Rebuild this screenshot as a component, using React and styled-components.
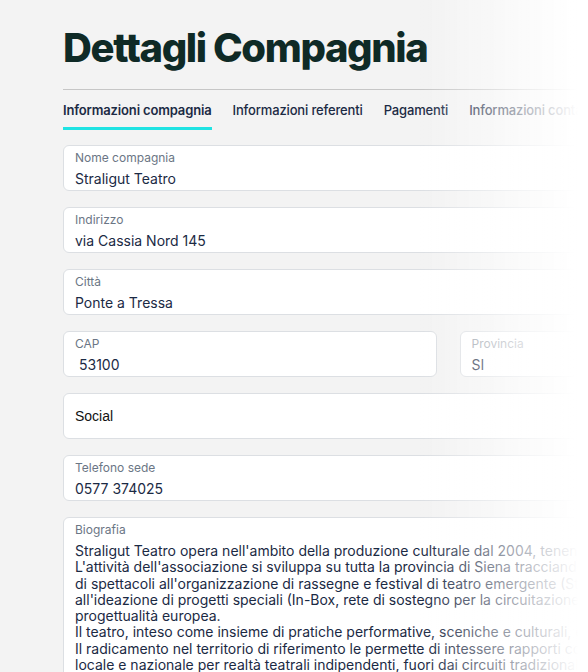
import styled, { createGlobalStyle } from 'styled-components';

const Global = createGlobalStyle`
  html, body { margin: 0; padding: 0; background: #f3f3f3; overflow: hidden; }
  body { font-family: Inter, "Noto Sans", sans-serif; }
`;

const Page = styled.div`
  width: 860px;
  padding: 24px 0 0 63px;
  box-sizing: border-box;
`;

const Title = styled.h1`
  margin: 0;
  font-size: 40px;
  line-height: 48px;
  font-weight: 800;
  color: #0f2a26;
  letter-spacing: -1.4px;
`;

const Tabs = styled.nav`
  margin-top: 17px;
  border-top: 1px solid #c6c6c6;
  display: flex;
  gap: 21px;
  padding-top: 12px;
`;

const Tab = styled.div`
  font-size: 13px;
  font-weight: ${({ $active }) => ($active ? 600 : 500)};
  letter-spacing: -0.15px;
  color: #1b2a44;
  padding-bottom: 9px;
  border-bottom: 3px solid ${({ $active }) => ($active ? '#1fe3e3' : 'transparent')};
  white-space: nowrap;
`;

const Form = styled.div`
  margin-top: 15px;
  display: flex;
  flex-direction: column;
  gap: 16px;
  width: 770px;
`;

const Row = styled.div`
  display: grid;
  grid-template-columns: 1fr 1fr;
  gap: 23px;
`;

const Field = styled.div`
  background: #fff;
  border: 1px solid #dcdfe3;
  border-radius: 6px;
  height: ${({ $tall }) => ($tall ? 'auto' : '46px')};
  box-sizing: border-box;
  padding: 5px 11px 0;
  display: flex;
  flex-direction: column;
  justify-content: ${({ $plain }) => ($plain ? 'center' : 'flex-start')};
  ${({ $plain }) => $plain && 'padding-top: 0;'}
`;

const Label = styled.div`
  font-size: 12px;
  line-height: 14px;
  color: ${({ $muted }) => ($muted ? '#9ba2ab' : '#6b7685')};
`;

const Value = styled.div`
  margin-top: 5px;
  font-size: 14px;
  line-height: 18px;
  color: #1b2a44;
  padding-left: ${({ $indent }) => ($indent ? '4px' : '0')};
`;

const Plain = styled.div`
  font-family: "Liberation Sans", Arial, sans-serif;
  font-size: 14px;
  color: #111;
`;

const Bio = styled.div`
  margin-top: 6px;
  font-size: 14px;
  line-height: 16.3px;
  color: #1b2a44;
  white-space: pre;
  overflow: hidden;
  padding-bottom: 20px;
`;

const Fade = styled.div`
  position: fixed;
  inset: 0;
  pointer-events: none;
  background: linear-gradient(to right, rgba(255,255,255,0) 420px, rgba(255,255,255,0.6) 515px, #fff 578px);
`;

const bio = `Straligut Teatro opera nell'ambito della produzione culturale dal 2004, tenendo insieme creazione artistica e formazione.
L'attività dell'associazione si sviluppa su tutta la provincia di Siena tracciando un percorso che va dalla produzione
di spettacoli all'organizzazione di rassegne e festival di teatro emergente (Straligut Festival, Sipario Aperto)
all'ideazione di progetti speciali (In-Box, rete di sostegno per la circuitazione del teatro emergente) e alla
progettualità europea.
Il teatro, inteso come insieme di pratiche performative, sceniche e culturali, è per Straligut uno strumento di crescita.
Il radicamento nel territorio di riferimento le permette di intessere rapporti con istituzioni e operatori a livello
locale e nazionale per realtà teatrali indipendenti, fuori dai circuiti tradizionali.`;

const tabs = ['Informazioni compagnia', 'Informazioni referenti', 'Pagamenti', 'Informazioni contatti'];

export default function App() {
  return (
    <>
      <Global />
      <Page>
        <Title>Dettagli Compagnia</Title>
        <Tabs>
          {tabs.map((t, i) => (
            <Tab key={t} $active={i === 0}>{t}</Tab>
          ))}
        </Tabs>
        <Form>
          <Field>
            <Label>Nome compagnia</Label>
            <Value>Straligut Teatro</Value>
          </Field>
          <Field>
            <Label>Indirizzo</Label>
            <Value>via Cassia Nord 145</Value>
          </Field>
          <Field>
            <Label>Città</Label>
            <Value>Ponte a Tressa</Value>
          </Field>
          <Row>
            <Field>
              <Label>CAP</Label>
              <Value $indent>53100</Value>
            </Field>
            <Field>
              <Label $muted>Provincia</Label>
              <Value>SI</Value>
            </Field>
          </Row>
          <Field $plain>
            <Plain>Social</Plain>
          </Field>
          <Field>
            <Label>Telefono sede</Label>
            <Value>0577 374025</Value>
          </Field>
          <Field $tall>
            <Label>Biografia</Label>
            <Bio>{bio}</Bio>
          </Field>
        </Form>
      </Page>
      <Fade />
    </>
  );
}
